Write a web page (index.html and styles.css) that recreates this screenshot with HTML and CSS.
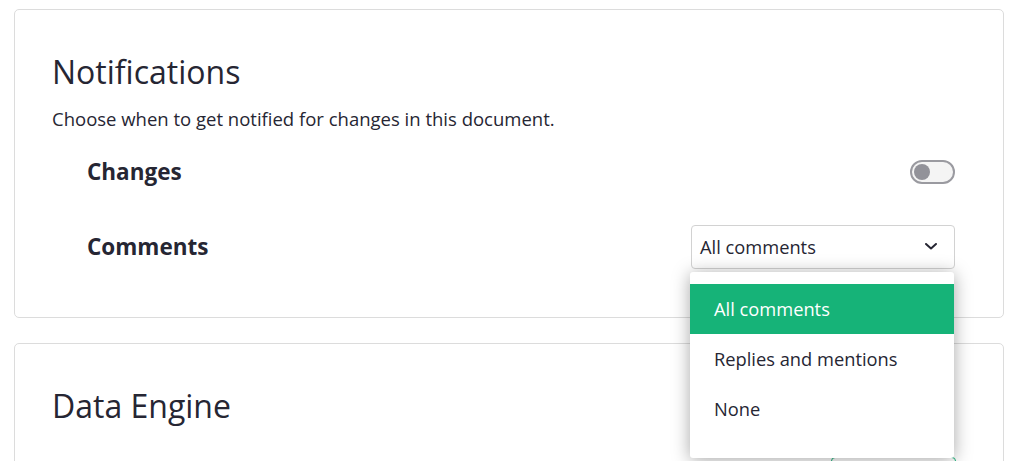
FILE: index.html
```html
<!DOCTYPE html>
<html lang="en">
<head>
<meta charset="utf-8">
<title>Document settings</title>
<link rel="stylesheet" href="styles.css">
</head>
<body>
<main class="page">
  <section class="card">
    <h2 class="card-title">Notifications</h2>
    <p class="card-desc">Choose when to get notified for changes in this document.</p>
    <div class="setting-row">
      <span class="setting-label">Changes</span>
      <span class="toggle"><span class="toggle-knob"></span></span>
    </div>
    <div class="setting-row row-comments">
      <span class="setting-label">Comments</span>
      <div class="select-wrap">
        <div class="select">
          <span class="select-value">All comments</span>
          <svg class="chevron" width="12" height="7" viewBox="0 0 12 7"><path d="M1 1 L6 5.5 L11 1" fill="none" stroke="#262633" stroke-width="2" stroke-linecap="round" stroke-linejoin="round"/></svg>
        </div>
        <ul class="menu">
          <li class="menu-item active">All comments</li>
          <li class="menu-item">Replies and mentions</li>
          <li class="menu-item">None</li>
        </ul>
      </div>
    </div>
  </section>
  <section class="card card-second">
    <h2 class="card-title">Data Engine</h2>
    <div class="engine-row">
      <div class="engine-btn"></div>
    </div>
  </section>
</main>
</body>
</html>
```
FILE: styles.css
```css
* { box-sizing: border-box; }
html, body { margin: 0; padding: 0; background: #fff; }
body {
  font-family: "Open Sans", "Noto Sans", sans-serif;
  color: #262633;
  overflow: hidden;
}
.page {
  padding: 9px 12px 0 14px;
  display: flex;
  flex-direction: column;
  gap: 25px;
}
.card {
  border: 1px solid #dcdcdc;
  border-radius: 5px;
  padding: 43px 48px 48px 37px;
}
.card-title {
  margin: 0;
  font-size: 32px;
  font-weight: 500;
  line-height: 38px;
}
.card-desc {
  margin: 16px 0 0;
  font-size: 18.5px;
  line-height: 24px;
}
.setting-row {
  display: flex;
  align-items: center;
  justify-content: space-between;
  padding-left: 35px;
  min-height: 45px;
  margin-top: 18px;
}
.row-comments { margin-top: 30px; }
.setting-label {
  font-size: 22.5px;
  font-weight: 700;
}
.toggle {
  width: 45px;
  height: 24px;
  border: 2px solid #9a9aa0;
  border-radius: 12px;
  background: #f4f4f4;
  display: flex;
  align-items: center;
  padding-left: 2px;
}
.toggle-knob {
  width: 16px;
  height: 16px;
  border-radius: 50%;
  background: #929299;
}
.select-wrap { position: relative; }
.select {
  width: 264px;
  height: 44px;
  border: 1px solid #d2d2d2;
  border-radius: 4px;
  display: flex;
  align-items: center;
  justify-content: space-between;
  padding: 0 17px 0 8px;
  font-size: 18.3px;
}
.menu {
  position: absolute;
  top: 47px;
  left: -1px;
  width: 264px;
  margin: 0;
  padding: 12px 0 24px;
  list-style: none;
  background: #fff;
  border-radius: 3px;
  box-shadow: 0 2px 18px rgba(0, 0, 0, 0.35);
  z-index: 5;
}
.menu-item {
  height: 50px;
  display: flex;
  align-items: center;
  padding-left: 24px;
  font-size: 18.3px;
}
.menu-item.active {
  background: #16b378;
  color: #fff;
}
.card-second { padding-bottom: 40px; }
.engine-row {
  display: flex;
  justify-content: flex-end;
  margin-top: 32px;
}
.engine-btn {
  width: 125px;
  height: 36px;
  margin-right: -1px;
  border: 1px solid #16b378;
  border-radius: 4px;
  background: #fff;
}
```
